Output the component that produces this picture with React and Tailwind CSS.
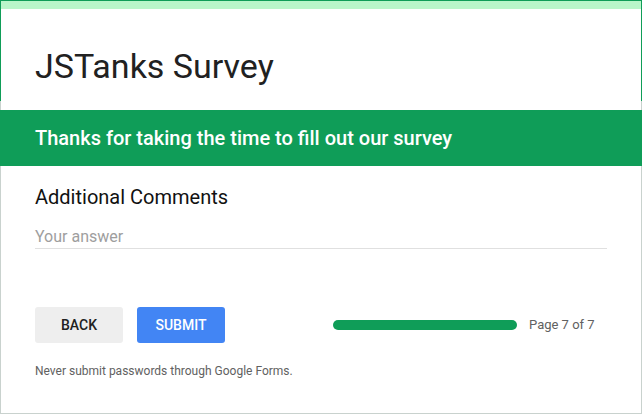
export default function App() {
  return (
    <div className="w-[642px] h-[414px] bg-white flex flex-col overflow-hidden" style={{ fontFamily: "Roboto, 'Noto Sans', sans-serif" }}>
      {/* Header card */}
      <div className="h-[101px] border border-b-0 border-[#0f9d58] flex flex-col">
        <div className="h-[8px] bg-[#b9f6ca]" />
        <h1 className="mt-[38px] pl-[34px] text-[34px] leading-[38px] text-[#212121]">JSTanks Survey</h1>
      </div>

      {/* Page card */}
      <div className="flex-1 border border-t-0 border-[#c9d2ce] flex flex-col">
        <div className="-mx-px mt-[9px] h-[56px] bg-[#0f9d58] flex items-center pl-[35px]">
          <h2 className="text-[20px] font-medium text-white">Thanks for taking the time to fill out our survey</h2>
        </div>

        <div className="pl-[34px] pr-[34px] flex flex-col">
          <div className="mt-[19px] text-[20px] leading-[24px] text-[#111]">Additional Comments</div>
          <div className="mt-[18px] w-[572px] pb-px border-b border-[#e0e0e0] text-[16px] leading-[20px] text-[#9e9e9e]">Your answer</div>

          <div className="mt-[58px] flex items-center">
            <button className="w-[88px] h-[36px] rounded-[3px] bg-[#eeeeee] text-[14px] font-medium text-[#212121]">BACK</button>
            <button className="ml-[14px] w-[88px] h-[36px] rounded-[3px] bg-[#4285f4] text-[14px] font-medium text-white">SUBMIT</button>
            <div className="ml-[108px] w-[184px] h-[10px] rounded-full bg-[#0f9d58]" />
            <span className="ml-[12px] text-[13px] text-[#616161]">Page 7 of 7</span>
          </div>

          <p className="mt-[20px] text-[12px] leading-[16px] text-[#616161]">Never submit passwords through Google Forms.</p>
        </div>
      </div>
    </div>
  );
}
